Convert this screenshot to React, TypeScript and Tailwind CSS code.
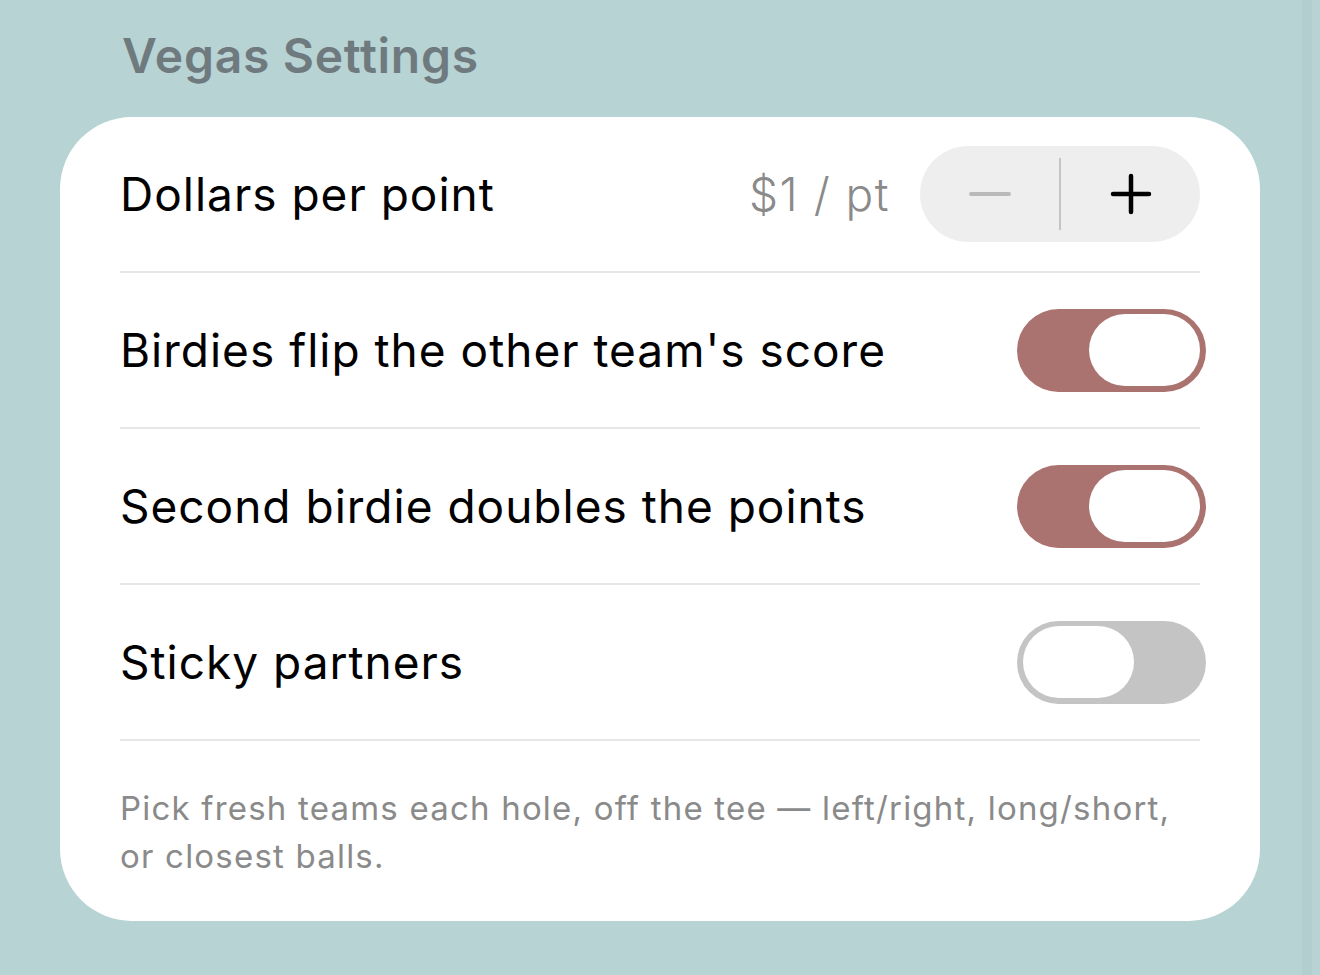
import React, { useState } from 'react';

const font = { fontFamily: 'Inter, "Noto Sans", sans-serif' };

function Toggle({ on, onChange }: { on: boolean; onChange: () => void }) {
  return (
    <button
      onClick={onChange}
      className={`-mr-[6px] flex h-[83px] w-[189px] items-center rounded-full p-[6px] ${
        on ? 'justify-end bg-[#ab7370]' : 'justify-start bg-[#c4c4c4]'
      }`}
    >
      <span className="block h-[72px] w-[111px] rounded-full bg-white" />
    </button>
  );
}

function Row({ label, children }: { label: string; children: React.ReactNode }) {
  return (
    <div className="flex h-[156px] items-center justify-between border-b-2 border-[#e6e6e6]">
      <span className="text-[46px] tracking-[1px] text-black">{label}</span>
      <div className="flex items-center">{children}</div>
    </div>
  );
}

export default function App() {
  const [dollars, setDollars] = useState(1);
  const [flip, setFlip] = useState(true);
  const [doubles, setDoubles] = useState(true);
  const [sticky, setSticky] = useState(false);

  return (
    <div className="flex h-[975px] w-[1320px] bg-[#b8d3d4]" style={font}>
      <div className="w-[1302px] pl-[60px]">
        {/* Section header */}
        <h2 className="flex h-[117px] items-center pb-[6px] pl-[62px] text-[48px] font-semibold tracking-[0.7px] text-[#6f7a7e]">
          Vegas Settings
        </h2>

        {/* Card */}
        <div className="h-[804px] w-[1200px] rounded-[72px] bg-white px-[60px]">
          <Row label="Dollars per point">
            <span className="mr-[30px] text-[46px] font-light tracking-[1.5px] text-[#8a8a8a]">${dollars} / pt</span>
            <div className="flex h-[96px] w-[280px] items-center rounded-[48px] bg-[#eeeeee]">
              <button
                onClick={() => setDollars(Math.max(1, dollars - 1))}
                className="flex h-full flex-1 items-center justify-center"
              >
                <span className="block h-[4px] w-[42px] rounded-full bg-[#b9b9b9]" />
              </button>
              <span className="block h-[72px] w-[2px] bg-[#c4c4c4]" />
              <button
                onClick={() => setDollars(dollars + 1)}
                className="flex h-full flex-1 items-center justify-center"
              >
                <svg width="42" height="42" viewBox="0 0 42 42">
                  <path d="M21 3v36M3 21h36" stroke="#000" strokeWidth="4.5" strokeLinecap="round" />
                </svg>
              </button>
            </div>
          </Row>
          <Row label="Birdies flip the other team's score">
            <Toggle on={flip} onChange={() => setFlip(!flip)} />
          </Row>
          <Row label="Second birdie doubles the points">
            <Toggle on={doubles} onChange={() => setDoubles(!doubles)} />
          </Row>
          <Row label="Sticky partners">
            <Toggle on={sticky} onChange={() => setSticky(!sticky)} />
          </Row>
          <p className="pt-[43px] text-[33px] leading-[48px] tracking-[1.2px] text-[#8a8a8a]">
            Pick fresh teams each hole, off the tee — left/right, long/short, or closest balls.
          </p>
        </div>
      </div>
      <div className="w-[10px] bg-[#b3cecf]" />
    </div>
  );
}
